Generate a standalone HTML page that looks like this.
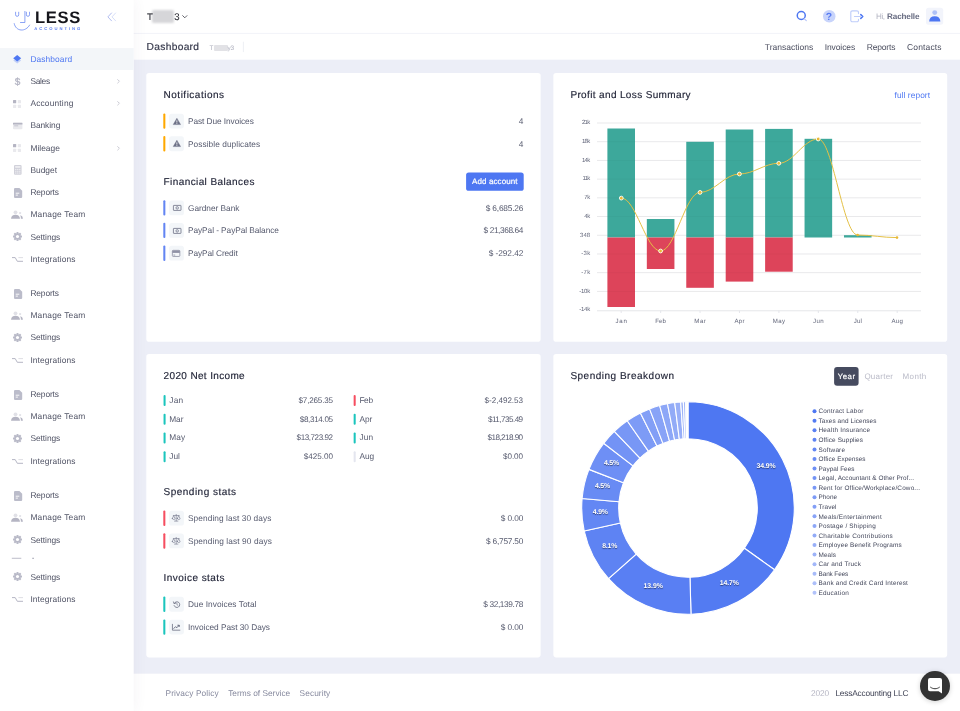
<!DOCTYPE html><html lang="en"><head><meta charset="utf-8"><title>Dashboard | LessAccounting</title><style>
*{box-sizing:border-box;margin:0;padding:0}
html,body{width:960px;height:711px;overflow:hidden}
body{position:relative;background:#eceef7;font-family:"Liberation Sans",sans-serif;color:#3f4254;text-rendering:geometricPrecision}
.t{position:absolute;white-space:nowrap;display:block}
.abs{position:absolute}
.side{position:absolute;left:0;top:0;width:133px;height:711px;background:#fff;box-shadow:0 0 14px rgba(82,63,105,.07);z-index:2}
.top{position:absolute;left:133.7px;top:0;right:0;height:33.8px;background:#fff;border-bottom:1px solid #f3f4f9}
.sub{position:absolute;left:133.7px;top:33.8px;right:0;height:25.9px;background:#fff}
.card{position:absolute;background:#fff;border-radius:3px}
.foot{position:absolute;left:133.7px;top:673.6px;right:0;bottom:0;background:#fff}
.act{position:absolute;left:0;top:48px;width:133.5px;height:22px;background:#f3f6f9}
.bar{position:absolute;width:2px;border-radius:1px}
.ib{position:absolute;width:14.8px;height:14.8px;border-radius:2.6px;background:#f3f6f9}
svg{position:absolute;overflow:visible}
.t,svg,.abs,.bar,.ib{z-index:3}
.tx{position:absolute;left:0;top:0;width:960px;height:711px;will-change:transform;z-index:4}

</style></head><body>
<svg style="left:0;top:0;z-index:1" width="960" height="711" viewBox="0 0 960 711"><rect x="133" y="0" width="827" height="59.700" fill="#fff"/><rect x="133" y="32.900" width="827" height=".9" fill="#f1f2f8"/><rect x="133" y="673.700" width="827" height="38" fill="#fff"/><rect x="146.300" y="73" width="394.350" height="268.750" rx="2.800" fill="#fff"/><rect x="553.350" y="73" width="393.850" height="268.750" rx="2.800" fill="#fff"/><rect x="146.300" y="354.100" width="394.350" height="303.300" rx="2.800" fill="#fff"/><rect x="553.350" y="354.100" width="393.850" height="303.300" rx="2.800" fill="#fff"/></svg>
<div class="side"></div><svg style="left:0;top:0;z-index:2" width="960" height="711" viewBox="0 0 960 711"><rect x="130" y="0" width="3.700" height="711" fill="#fff"/><rect x="0" y="48.100" width="133.700" height="21.900" fill="#f3f6f9"/></svg>
<svg style="left:0;top:0" width="134" height="40" viewBox="0 0 134 40" fill="none" stroke="#5a7df0" stroke-width="0.7" stroke-linecap="round" stroke-linejoin="round">
<path d="M15.6 12.2v2.6a1.55 1.55 0 0 0 3.1 0v-2.6"/><path d="M26.4 12.2v2.6a1.55 1.55 0 0 0 3.1 0v-2.6"/>
<path d="M24.9 11.4v11.1h-4.4"/><path d="M14.2 23.6c1.6 8.2 11.5 8.6 15.4 1.5"/>
<path d="M111.5 13l-3.6 3.9 3.6 3.9" stroke="#a9b6ee" stroke-width="0.9"/><path d="M115.6 13l-3.6 3.9 3.6 3.9" stroke="#d3daf7" stroke-width="0.9"/>
</svg>
<svg style="left:13.3px;top:55.0px" width="8.4" height="9" viewBox="0 0 8.4 9"><path d="M4.2 2.6L8.1 5.5 4.2 8.4 0.3 5.5z" fill="#4e77f2" opacity=".3"/><path d="M4.2 0L8.2 3.3 4.2 6.6 0.2 3.3z" fill="#4e77f2"/></svg>
<svg style="left:116.6px;top:79.0px" width="3" height="4.6" viewBox="0 0 3 4.6" fill="none" stroke="#b5b5c3" stroke-width=".7"><path d="M.4 .3l2 2-2 2"/></svg>
<svg style="left:13.1px;top:100.0px" width="8" height="8" viewBox="0 0 8 8" fill="#b5b5c3"><rect x="0" y="0" width="3.2" height="3.2" rx=".5"/><rect x="4.8" y="0" width="3.2" height="3.2" rx=".5" opacity=".3"/><rect x="0" y="4.8" width="3.2" height="3.2" rx=".5" opacity=".3"/><rect x="4.8" y="4.8" width="3.2" height="3.2" rx=".5" opacity=".3"/></svg>
<svg style="left:116.6px;top:101.2px" width="3" height="4.6" viewBox="0 0 3 4.6" fill="none" stroke="#b5b5c3" stroke-width=".7"><path d="M.4 .3l2 2-2 2"/></svg>
<svg style="left:12.7px;top:122.0px" width="9.4" height="7.2" viewBox="0 0 9.4 7.2" fill="#b5b5c3"><rect x="0" y="0" width="9.4" height="7.2" rx=".8" opacity=".3"/><rect x="0" y="1" width="9.4" height="1.5"/><rect x="1.2" y="3.4" width="4" height=".9" opacity=".8"/></svg>
<svg style="left:13.1px;top:144.4px" width="8" height="8" viewBox="0 0 8 8" fill="#b5b5c3"><rect x="0" y="0" width="3.2" height="3.2" rx=".5"/><rect x="4.8" y="0" width="3.2" height="3.2" rx=".5" opacity=".3"/><rect x="0" y="4.8" width="3.2" height="3.2" rx=".5" opacity=".3"/><rect x="4.8" y="4.8" width="3.2" height="3.2" rx=".5" opacity=".3"/></svg>
<svg style="left:116.6px;top:145.6px" width="3" height="4.6" viewBox="0 0 3 4.6" fill="none" stroke="#b5b5c3" stroke-width=".7"><path d="M.4 .3l2 2-2 2"/></svg>
<svg style="left:13.7px;top:165.2px" width="7.6" height="9.800" viewBox="0 0 7.6 9.800" fill="#b5b5c3"><rect x="0" y="0" width="7.6" height="9.800" rx="1.100" opacity=".62"/><rect x="1.200" y="1.200" width="5.200" height="1.500" fill="#fff" opacity=".75"/><g fill="#fff" opacity=".7"><rect x="1.200" y="3.900" width="1.200" height="1.100"/><rect x="3.200" y="3.900" width="1.200" height="1.100"/><rect x="5.200" y="3.900" width="1.200" height="1.100"/><rect x="1.200" y="5.700" width="1.200" height="1.100"/><rect x="3.200" y="5.700" width="1.200" height="1.100"/><rect x="5.200" y="5.700" width="1.200" height="1.100"/><rect x="1.200" y="7.500" width="1.200" height="1.100"/><rect x="3.200" y="7.500" width="1.200" height="1.100"/><rect x="5.200" y="7.500" width="1.200" height="1.100"/></g></svg>
<svg style="left:13.7px;top:187.8px" width="8.200" height="10" viewBox="0 0 8.200 10"><path d="M1.100 0h4.300L8.200 2.800v6.100a1.100 1.100 0 0 1-1.100 1.100H1.100a1.100 1.100 0 0 1-1.100-1.100V1.100a1.100 1.100 0 0 1 1.100-1.100z" fill="#bbbcca"/><rect x="1.700" y="4.700" width="3.600" height="1" fill="#fff" opacity=".9"/><rect x="1.700" y="6.600" width="2.200" height="1" fill="#fff" opacity=".9"/></svg>
<svg style="left:11.4px;top:209.9px" width="12" height="9" viewBox="0 0 12 9" fill="#b5b5c3"><circle cx="4.500" cy="2.300" r="1.900" opacity=".4"/><path d="M0 8.800c.2-2.700 1.800-4 4.500-4s4.300 1.300 4.500 4z"/><circle cx="9.100" cy="3.100" r="1.150" opacity=".4"/><path d="M9.900 8.800h2c-.1-2-.9-3.200-2.800-3.500 .6.900.8 2 .8 3.500z"/></svg>
<svg style="left:12.5px;top:232.2px" width="9" height="9" viewBox="-4.5 -4.5 9 9"><g fill="#b9bac8"><circle r="3.250"/><rect x="-1" y="-4.500" width="2" height="2.400" rx=".35" transform="rotate(0)"/><rect x="-1" y="-4.500" width="2" height="2.400" rx=".35" transform="rotate(45)"/><rect x="-1" y="-4.500" width="2" height="2.400" rx=".35" transform="rotate(90)"/><rect x="-1" y="-4.500" width="2" height="2.400" rx=".35" transform="rotate(135)"/><rect x="-1" y="-4.500" width="2" height="2.400" rx=".35" transform="rotate(180)"/><rect x="-1" y="-4.500" width="2" height="2.400" rx=".35" transform="rotate(225)"/><rect x="-1" y="-4.500" width="2" height="2.400" rx=".35" transform="rotate(270)"/><rect x="-1" y="-4.500" width="2" height="2.400" rx=".35" transform="rotate(315)"/></g><circle r="1.550" fill="#fff"/></svg>
<svg style="left:11.6px;top:256.7px" width="11" height="5" viewBox="0 0 11 5" fill="none" stroke="#adaebd" stroke-width=".9"><path d="M0 .6h3.200L5.300 4.300H11"/><path d="M6.400 .6H11" opacity=".45"/></svg>
<svg style="left:13.7px;top:288.6px" width="8.200" height="10" viewBox="0 0 8.200 10"><path d="M1.100 0h4.300L8.200 2.800v6.100a1.100 1.100 0 0 1-1.100 1.100H1.100a1.100 1.100 0 0 1-1.100-1.100V1.100a1.100 1.100 0 0 1 1.100-1.100z" fill="#bbbcca"/><rect x="1.700" y="4.700" width="3.600" height="1" fill="#fff" opacity=".9"/><rect x="1.700" y="6.600" width="2.200" height="1" fill="#fff" opacity=".9"/></svg>
<svg style="left:11.4px;top:310.7px" width="12" height="9" viewBox="0 0 12 9" fill="#b5b5c3"><circle cx="4.500" cy="2.300" r="1.900" opacity=".4"/><path d="M0 8.800c.2-2.700 1.800-4 4.500-4s4.300 1.300 4.500 4z"/><circle cx="9.100" cy="3.100" r="1.150" opacity=".4"/><path d="M9.900 8.800h2c-.1-2-.9-3.200-2.800-3.500 .6.900.8 2 .8 3.500z"/></svg>
<svg style="left:12.5px;top:333.0px" width="9" height="9" viewBox="-4.5 -4.5 9 9"><g fill="#b9bac8"><circle r="3.250"/><rect x="-1" y="-4.500" width="2" height="2.400" rx=".35" transform="rotate(0)"/><rect x="-1" y="-4.500" width="2" height="2.400" rx=".35" transform="rotate(45)"/><rect x="-1" y="-4.500" width="2" height="2.400" rx=".35" transform="rotate(90)"/><rect x="-1" y="-4.500" width="2" height="2.400" rx=".35" transform="rotate(135)"/><rect x="-1" y="-4.500" width="2" height="2.400" rx=".35" transform="rotate(180)"/><rect x="-1" y="-4.500" width="2" height="2.400" rx=".35" transform="rotate(225)"/><rect x="-1" y="-4.500" width="2" height="2.400" rx=".35" transform="rotate(270)"/><rect x="-1" y="-4.500" width="2" height="2.400" rx=".35" transform="rotate(315)"/></g><circle r="1.550" fill="#fff"/></svg>
<svg style="left:11.6px;top:357.5px" width="11" height="5" viewBox="0 0 11 5" fill="none" stroke="#adaebd" stroke-width=".9"><path d="M0 .6h3.200L5.300 4.300H11"/><path d="M6.400 .6H11" opacity=".45"/></svg>
<svg style="left:13.7px;top:389.6px" width="8.200" height="10" viewBox="0 0 8.200 10"><path d="M1.100 0h4.300L8.200 2.800v6.100a1.100 1.100 0 0 1-1.100 1.100H1.100a1.100 1.100 0 0 1-1.100-1.100V1.100a1.100 1.100 0 0 1 1.100-1.100z" fill="#bbbcca"/><rect x="1.700" y="4.700" width="3.600" height="1" fill="#fff" opacity=".9"/><rect x="1.700" y="6.600" width="2.200" height="1" fill="#fff" opacity=".9"/></svg>
<svg style="left:11.4px;top:411.7px" width="12" height="9" viewBox="0 0 12 9" fill="#b5b5c3"><circle cx="4.500" cy="2.300" r="1.900" opacity=".4"/><path d="M0 8.800c.2-2.700 1.800-4 4.500-4s4.300 1.300 4.500 4z"/><circle cx="9.100" cy="3.100" r="1.150" opacity=".4"/><path d="M9.900 8.800h2c-.1-2-.9-3.200-2.800-3.500 .6.900.8 2 .8 3.500z"/></svg>
<svg style="left:12.5px;top:434.0px" width="9" height="9" viewBox="-4.5 -4.5 9 9"><g fill="#b9bac8"><circle r="3.250"/><rect x="-1" y="-4.500" width="2" height="2.400" rx=".35" transform="rotate(0)"/><rect x="-1" y="-4.500" width="2" height="2.400" rx=".35" transform="rotate(45)"/><rect x="-1" y="-4.500" width="2" height="2.400" rx=".35" transform="rotate(90)"/><rect x="-1" y="-4.500" width="2" height="2.400" rx=".35" transform="rotate(135)"/><rect x="-1" y="-4.500" width="2" height="2.400" rx=".35" transform="rotate(180)"/><rect x="-1" y="-4.500" width="2" height="2.400" rx=".35" transform="rotate(225)"/><rect x="-1" y="-4.500" width="2" height="2.400" rx=".35" transform="rotate(270)"/><rect x="-1" y="-4.500" width="2" height="2.400" rx=".35" transform="rotate(315)"/></g><circle r="1.550" fill="#fff"/></svg>
<svg style="left:11.6px;top:458.5px" width="11" height="5" viewBox="0 0 11 5" fill="none" stroke="#adaebd" stroke-width=".9"><path d="M0 .6h3.200L5.300 4.300H11"/><path d="M6.400 .6H11" opacity=".45"/></svg>
<svg style="left:13.7px;top:490.7px" width="8.200" height="10" viewBox="0 0 8.200 10"><path d="M1.100 0h4.300L8.200 2.800v6.100a1.100 1.100 0 0 1-1.100 1.100H1.100a1.100 1.100 0 0 1-1.100-1.100V1.100a1.100 1.100 0 0 1 1.100-1.100z" fill="#bbbcca"/><rect x="1.700" y="4.700" width="3.600" height="1" fill="#fff" opacity=".9"/><rect x="1.700" y="6.600" width="2.200" height="1" fill="#fff" opacity=".9"/></svg>
<svg style="left:11.4px;top:512.8px" width="12" height="9" viewBox="0 0 12 9" fill="#b5b5c3"><circle cx="4.500" cy="2.300" r="1.900" opacity=".4"/><path d="M0 8.800c.2-2.700 1.800-4 4.500-4s4.300 1.300 4.500 4z"/><circle cx="9.100" cy="3.100" r="1.150" opacity=".4"/><path d="M9.900 8.800h2c-.1-2-.9-3.200-2.800-3.500 .6.900.8 2 .8 3.500z"/></svg>
<svg style="left:12.5px;top:535.1px" width="9" height="9" viewBox="-4.5 -4.5 9 9"><g fill="#b9bac8"><circle r="3.250"/><rect x="-1" y="-4.500" width="2" height="2.400" rx=".35" transform="rotate(0)"/><rect x="-1" y="-4.500" width="2" height="2.400" rx=".35" transform="rotate(45)"/><rect x="-1" y="-4.500" width="2" height="2.400" rx=".35" transform="rotate(90)"/><rect x="-1" y="-4.500" width="2" height="2.400" rx=".35" transform="rotate(135)"/><rect x="-1" y="-4.500" width="2" height="2.400" rx=".35" transform="rotate(180)"/><rect x="-1" y="-4.500" width="2" height="2.400" rx=".35" transform="rotate(225)"/><rect x="-1" y="-4.500" width="2" height="2.400" rx=".35" transform="rotate(270)"/><rect x="-1" y="-4.500" width="2" height="2.400" rx=".35" transform="rotate(315)"/></g><circle r="1.550" fill="#fff"/></svg>
<svg style="left:0;top:0" width="960" height="711" viewBox="0 0 960 711"><rect x="11.8" y="557.8" width="9.5" height="0.9" rx="0" fill="#b5b5c3"/></svg><svg style="left:0;top:0" width="960" height="711" viewBox="0 0 960 711"><rect x="32.2" y="557.8" width="1.8" height="0.9" rx="0" fill="#9a9cab"/></svg>
<svg style="left:12.5px;top:572.1px" width="9" height="9" viewBox="-4.5 -4.5 9 9"><g fill="#b9bac8"><circle r="3.250"/><rect x="-1" y="-4.500" width="2" height="2.400" rx=".35" transform="rotate(0)"/><rect x="-1" y="-4.500" width="2" height="2.400" rx=".35" transform="rotate(45)"/><rect x="-1" y="-4.500" width="2" height="2.400" rx=".35" transform="rotate(90)"/><rect x="-1" y="-4.500" width="2" height="2.400" rx=".35" transform="rotate(135)"/><rect x="-1" y="-4.500" width="2" height="2.400" rx=".35" transform="rotate(180)"/><rect x="-1" y="-4.500" width="2" height="2.400" rx=".35" transform="rotate(225)"/><rect x="-1" y="-4.500" width="2" height="2.400" rx=".35" transform="rotate(270)"/><rect x="-1" y="-4.500" width="2" height="2.400" rx=".35" transform="rotate(315)"/></g><circle r="1.550" fill="#fff"/></svg>
<svg style="left:11.6px;top:596.6px" width="11" height="5" viewBox="0 0 11 5" fill="none" stroke="#adaebd" stroke-width=".9"><path d="M0 .6h3.200L5.300 4.300H11"/><path d="M6.400 .6H11" opacity=".45"/></svg>
<div class="abs" style="left:152px;top:10.2px;width:22px;height:12.4px;background:#d6d6d9;border-radius:1.5px;filter:blur(.8px)"></div>
<svg style="left:182.4px;top:14.6px" width="5.6" height="3.4" viewBox="0 0 5.6 3.4" fill="none" stroke="#3a3b45" stroke-width=".8"><path d="M.4 .4l2.400 2.400 2.400-2.400"/></svg>
<svg style="left:795px;top:10px" width="13" height="13" viewBox="0 0 13 13" fill="none"><circle cx="6.250" cy="5.500" r="4" stroke="#4e77f2" stroke-width="1.500"/><path d="M9.300 8.700l2 1.900" stroke="#b9c7f9" stroke-width="1.200" stroke-linecap="round"/></svg>
<svg style="left:822.5px;top:9.65px" width="12.5" height="12.5" viewBox="0 0 12.5 12.5"><circle cx="6.250" cy="6.250" r="6.250" fill="#c8d4fb"/></svg>
<svg style="left:850px;top:9.6px" width="13.4" height="12.6" viewBox="0 0 13.4 12.6" fill="none" stroke-linecap="round" stroke-linejoin="round"><path d="M8.500 3.600V2.400A1.600 1.600 0 0 0 6.900 .8H2.400A1.600 1.600 0 0 0 .8 2.400v7.800a1.600 1.600 0 0 0 1.600 1.600h4.500a1.600 1.600 0 0 0 1.600-1.600V9.400" stroke="#bfcdfa" stroke-width="1.150"/><path d="M4.400 6.500h6" stroke="#bfcdfa" stroke-width="1.100"/><path d="M10.800 4.600l2 1.900-2 1.900" stroke="#4e77f2" stroke-width="1.500"/></svg>
<svg style="left:0;top:0" width="960" height="711" viewBox="0 0 960 711"><rect x="926" y="7.750" width="17.200" height="17.100" rx="2.500" fill="#f2f4fb"/></svg><svg style="left:928.6px;top:10.2px" width="11.8" height="11.6" viewBox="0 0 11.8 11.6" fill="#4e77f2"><circle cx="5.750" cy="2.600" r="2.450" opacity=".4"/><path d="M.15 11.500c.1-3.500 2.100-5.200 5.600-5.200s5.500 1.700 5.600 5.200z"/></svg>
<div class="abs" style="left:213.6px;top:44.6px;width:14.2px;height:6.6px;background:#e2e2e6;border-radius:1px;filter:blur(.5px)"></div>
<svg style="left:0;top:0" width="960" height="711" viewBox="0 0 960 711"><rect x="242.9" y="41.7" width="0.8" height="10.4" rx="0" fill="#e9ebf1"/></svg>
<div class="abs" style="left:919.7px;top:671px;width:30px;height:30px;border-radius:50%;background:#333;box-shadow:0 1px 5px rgba(0,0,0,.18);z-index:5"></div><svg style="left:927.8px;top:677.8px;z-index:6" width="14" height="16" viewBox="0 0 14 16"><path d="M2 0h10a2 2 0 0 1 2 2v13.600l-3.400-2.400H2a2 2 0 0 1-2-2V2a2 2 0 0 1 2-2z" fill="#fff"/><path d="M2.600 9.300c2.600 2 6.200 2 8.800 0" fill="none" stroke="#333" stroke-width="1" stroke-linecap="round"/></svg>
<svg style="left:0;top:0" width="960" height="711" viewBox="0 0 960 711"><rect x="163.300" y="113.40" width="2.050" height="15.400" rx="1" fill="#ffa800"/><rect x="169.100" y="113.65" width="14.800" height="14.800" rx="2.600" fill="#f3f6f9"/></svg>
<svg style="left:172.5px;top:117.7px" width="7.800" height="6.800" viewBox="0 0 7.800 6.800"><path d="M3.900 .2L7.600 6.600H.2z" fill="#6c7086" stroke="#6c7086" stroke-width=".4" stroke-linejoin="round"/><rect x="3.500" y="2.300" width=".8" height="2.300" fill="#fff"/><rect x="3.500" y="5.050" width=".8" height=".8" fill="#fff"/></svg>
<svg style="left:0;top:0" width="960" height="711" viewBox="0 0 960 711"><rect x="163.300" y="136.10" width="2.050" height="15.400" rx="1" fill="#ffa800"/><rect x="169.100" y="136.35" width="14.800" height="14.800" rx="2.600" fill="#f3f6f9"/></svg>
<svg style="left:172.5px;top:140.4px" width="7.800" height="6.800" viewBox="0 0 7.800 6.800"><path d="M3.900 .2L7.600 6.600H.2z" fill="#6c7086" stroke="#6c7086" stroke-width=".4" stroke-linejoin="round"/><rect x="3.500" y="2.300" width=".8" height="2.300" fill="#fff"/><rect x="3.500" y="5.050" width=".8" height=".8" fill="#fff"/></svg>
<svg style="left:0;top:0" width="960" height="711" viewBox="0 0 960 711"><rect x="163.300" y="200.20" width="2.050" height="15.400" rx="1" fill="#6385f3"/><rect x="169.100" y="200.45" width="14.800" height="14.800" rx="2.600" fill="#f3f6f9"/></svg>
<svg style="left:172.6px;top:205.0px" width="8.400" height="5.800" viewBox="0 0 8.400 5.800" fill="none" stroke="#62667c" stroke-width=".75"><rect x=".4" y=".4" width="7.600" height="5" rx=".4"/><circle cx="4.200" cy="2.900" r="1.250" stroke-width=".7"/></svg>
<svg style="left:0;top:0" width="960" height="711" viewBox="0 0 960 711"><rect x="163.300" y="222.70" width="2.050" height="15.400" rx="1" fill="#6385f3"/><rect x="169.100" y="222.95" width="14.800" height="14.800" rx="2.600" fill="#f3f6f9"/></svg>
<svg style="left:172.6px;top:227.5px" width="8.400" height="5.800" viewBox="0 0 8.400 5.800" fill="none" stroke="#62667c" stroke-width=".75"><rect x=".4" y=".4" width="7.600" height="5" rx=".4"/><circle cx="4.200" cy="2.900" r="1.250" stroke-width=".7"/></svg>
<svg style="left:0;top:0" width="960" height="711" viewBox="0 0 960 711"><rect x="163.300" y="245.50" width="2.050" height="15.400" rx="1" fill="#6385f3"/><rect x="169.100" y="245.75" width="14.800" height="14.800" rx="2.600" fill="#f3f6f9"/></svg>
<svg style="left:172.3px;top:249.9px" width="8.200" height="6.800" viewBox="0 0 8.200 6.800"><rect x=".35" y=".35" width="7.500" height="6.100" rx=".8" fill="none" stroke="#7d8096" stroke-width=".7"/><rect x=".35" y=".6" width="7.500" height="2.300" fill="#8f92a6"/><rect x="1.300" y="4.700" width="1.900" height=".7" fill="#7d8096"/></svg>
<svg style="left:0;top:0" width="960" height="711" viewBox="0 0 960 711"><rect x="466.1" y="172.4" width="57.6" height="18.4" rx="2.6" fill="#4e77f2"/></svg>
<svg style="left:0;top:0" width="960" height="711" viewBox="0 0 960 711"><rect x="163.55" y="395.05" width="2.050" height="10.900" rx="1" fill="#1bc5bd"/></svg>
<svg style="left:0;top:0" width="960" height="711" viewBox="0 0 960 711"><rect x="353.65" y="395.05" width="2.050" height="10.900" rx="1" fill="#f64e60"/></svg>
<svg style="left:0;top:0" width="960" height="711" viewBox="0 0 960 711"><rect x="163.55" y="413.82" width="2.050" height="10.900" rx="1" fill="#1bc5bd"/></svg>
<svg style="left:0;top:0" width="960" height="711" viewBox="0 0 960 711"><rect x="353.65" y="413.82" width="2.050" height="10.900" rx="1" fill="#1bc5bd"/></svg>
<svg style="left:0;top:0" width="960" height="711" viewBox="0 0 960 711"><rect x="163.55" y="432.59" width="2.050" height="10.900" rx="1" fill="#1bc5bd"/></svg>
<svg style="left:0;top:0" width="960" height="711" viewBox="0 0 960 711"><rect x="353.65" y="432.59" width="2.050" height="10.900" rx="1" fill="#1bc5bd"/></svg>
<svg style="left:0;top:0" width="960" height="711" viewBox="0 0 960 711"><rect x="163.55" y="451.36" width="2.050" height="10.900" rx="1" fill="#1bc5bd"/></svg>
<svg style="left:0;top:0" width="960" height="711" viewBox="0 0 960 711"><rect x="353.65" y="451.36" width="2.050" height="10.900" rx="1" fill="#e4e6ef"/></svg>
<svg style="left:0;top:0" width="960" height="711" viewBox="0 0 960 711"><rect x="163.300" y="510.50" width="2.050" height="15.400" rx="1" fill="#f64e60"/><rect x="169.100" y="510.75" width="14.800" height="14.800" rx="2.600" fill="#f3f6f9"/></svg>
<svg style="left:172.2px;top:514.3px" width="8.400" height="7.600" viewBox="0 0 8.400 7.600" fill="none" stroke="#6d7187" stroke-width=".6" stroke-linecap="round" stroke-linejoin="round"><path d="M4.200 .4v6.400M2.500 7.100h3.400M1.300 1.500h5.800"/><path d="M.35 4.400L1.700 1.700l1.350 2.700a1.350 1.150 0 0 1-2.700 0zM5.350 4.400L6.700 1.700l1.350 2.700a1.350 1.150 0 0 1-2.700 0z"/></svg>
<svg style="left:0;top:0" width="960" height="711" viewBox="0 0 960 711"><rect x="163.300" y="533.30" width="2.050" height="15.400" rx="1" fill="#f64e60"/><rect x="169.100" y="533.55" width="14.800" height="14.800" rx="2.600" fill="#f3f6f9"/></svg>
<svg style="left:172.2px;top:537.1px" width="8.400" height="7.600" viewBox="0 0 8.400 7.600" fill="none" stroke="#6d7187" stroke-width=".6" stroke-linecap="round" stroke-linejoin="round"><path d="M4.200 .4v6.400M2.500 7.100h3.400M1.300 1.500h5.800"/><path d="M.35 4.400L1.700 1.700l1.350 2.700a1.350 1.150 0 0 1-2.700 0zM5.350 4.400L6.700 1.700l1.350 2.700a1.350 1.150 0 0 1-2.700 0z"/></svg>
<svg style="left:0;top:0" width="960" height="711" viewBox="0 0 960 711"><rect x="163.300" y="596.60" width="2.050" height="15.400" rx="1" fill="#1bc5bd"/><rect x="169.100" y="596.85" width="14.800" height="14.800" rx="2.600" fill="#f3f6f9"/></svg>
<svg style="left:172.8px;top:600.9px" width="7.200" height="6.800" viewBox="0 0 7.200 6.800" fill="none" stroke="#5f6378" stroke-width=".75" stroke-linecap="round" stroke-linejoin="round"><path d="M1.300 2.200A2.900 2.900 0 1 1 1.100 4.600"/><path d="M.5 .9l.6 1.700 1.700-.5" /><path d="M3.900 2.100v1.500l1 .7" stroke-width=".6"/></svg>
<svg style="left:0;top:0" width="960" height="711" viewBox="0 0 960 711"><rect x="163.300" y="619.40" width="2.050" height="15.400" rx="1" fill="#1bc5bd"/><rect x="169.100" y="619.65" width="14.800" height="14.800" rx="2.600" fill="#f3f6f9"/></svg>
<svg style="left:172.3px;top:623.8px" width="8.200" height="6.600" viewBox="0 0 7.600 6.400" preserveAspectRatio="none" fill="none" stroke="#5f6378" stroke-width=".7" stroke-linecap="round" stroke-linejoin="round"><path d="M.4 .3v5.700h6.900"/><path d="M1.700 4.300l1.600-1.700 1.200 1 2.100-2.300M5.400 1.200h1.300v1.300" stroke-width=".85"/></svg>
<svg style="left:0;top:0" width="960" height="711" viewBox="0 0 960 711"><path d="M597 123.00H921" stroke="#efeff1" stroke-width="1"/><path d="M597 141.71H921" stroke="#efeff1" stroke-width="1"/><path d="M597 160.42H921" stroke="#efeff1" stroke-width="1"/><path d="M597 179.13H921" stroke="#efeff1" stroke-width="1"/><path d="M597 197.84H921" stroke="#efeff1" stroke-width="1"/><path d="M597 216.55H921" stroke="#efeff1" stroke-width="1"/><path d="M597 235.26H921" stroke="#efeff1" stroke-width="1"/><path d="M597 253.97H921" stroke="#efeff1" stroke-width="1"/><path d="M597 272.68H921" stroke="#efeff1" stroke-width="1"/><path d="M597 291.39H921" stroke="#efeff1" stroke-width="1"/><path d="M597 310.80H921" stroke="#e2e3e6" stroke-width="0.9"/><path d="M621.20 310.80v2.200" stroke="#dfe1e7" stroke-width=".8"/><rect x="607.40" y="128.5" width="27.6" height="109.00" fill="#3da89b"/><rect x="607.40" y="237.5" width="27.6" height="69.50" fill="#dd445a"/><path d="M660.63 310.80v2.200" stroke="#dfe1e7" stroke-width=".8"/><rect x="646.83" y="219.0" width="27.6" height="18.50" fill="#3da89b"/><rect x="646.83" y="237.5" width="27.6" height="31.50" fill="#dd445a"/><path d="M700.06 310.80v2.200" stroke="#dfe1e7" stroke-width=".8"/><rect x="686.26" y="141.8" width="27.6" height="95.70" fill="#3da89b"/><rect x="686.26" y="237.5" width="27.6" height="50.30" fill="#dd445a"/><path d="M739.49 310.80v2.200" stroke="#dfe1e7" stroke-width=".8"/><rect x="725.69" y="129.5" width="27.6" height="108.00" fill="#3da89b"/><rect x="725.69" y="237.5" width="27.6" height="44.10" fill="#dd445a"/><path d="M778.92 310.80v2.200" stroke="#dfe1e7" stroke-width=".8"/><rect x="765.12" y="128.9" width="27.6" height="108.60" fill="#3da89b"/><rect x="765.12" y="237.5" width="27.6" height="34.20" fill="#dd445a"/><path d="M818.35 310.80v2.200" stroke="#dfe1e7" stroke-width=".8"/><rect x="804.55" y="138.8" width="27.6" height="98.70" fill="#3da89b"/><path d="M857.78 310.80v2.200" stroke="#dfe1e7" stroke-width=".8"/><rect x="843.98" y="235.2" width="27.6" height="2.30" fill="#3da89b"/><path d="M897.21 310.80v2.200" stroke="#dfe1e7" stroke-width=".8"/><path d="M597 123.00H921" stroke="#000" stroke-opacity=".028" stroke-width="1"/><path d="M597 141.71H921" stroke="#000" stroke-opacity=".028" stroke-width="1"/><path d="M597 160.42H921" stroke="#000" stroke-opacity=".028" stroke-width="1"/><path d="M597 179.13H921" stroke="#000" stroke-opacity=".028" stroke-width="1"/><path d="M597 197.84H921" stroke="#000" stroke-opacity=".028" stroke-width="1"/><path d="M597 216.55H921" stroke="#000" stroke-opacity=".028" stroke-width="1"/><path d="M597 235.26H921" stroke="#000" stroke-opacity=".028" stroke-width="1"/><path d="M597 253.97H921" stroke="#000" stroke-opacity=".028" stroke-width="1"/><path d="M597 272.68H921" stroke="#000" stroke-opacity=".028" stroke-width="1"/><path d="M597 291.39H921" stroke="#000" stroke-opacity=".028" stroke-width="1"/><path d="M621.3 198.1C635.9 198.1 646.0 251.0 660.6 251.0C675.2 251.0 685.4 192.4 700.0 192.4C714.6 192.4 724.8 174.0 739.4 174.0C754.0 174.0 764.2 163.3 778.8 163.3C793.4 163.3 803.6 139.0 818.2 139.0C832.8 139.0 843.0 235.0 857.6 235.0C872.2 235.0 882.4 237.6 897.0 237.6" fill="none" stroke="#e4c045" stroke-width="1"/><circle cx="621.3" cy="198.1" r="1.900" fill="#e9b936" stroke="#fff" stroke-width=".9"/><circle cx="660.6" cy="251.0" r="1.900" fill="#e9b936" stroke="#fff" stroke-width=".9"/><circle cx="700.0" cy="192.4" r="1.900" fill="#e9b936" stroke="#fff" stroke-width=".9"/><circle cx="739.4" cy="174.0" r="1.900" fill="#e9b936" stroke="#fff" stroke-width=".9"/><circle cx="778.8" cy="163.3" r="1.900" fill="#e9b936" stroke="#fff" stroke-width=".9"/><circle cx="818.2" cy="139.0" r="1.900" fill="#e9b936" stroke="#fff" stroke-width=".9"/><circle cx="857.6" cy="235.0" r="1.300" fill="#e9b936"/><circle cx="897.0" cy="237.6" r="1.300" fill="#e9b936"/></svg>
<svg style="left:0;top:0" width="960" height="711" viewBox="0 0 960 711"><rect x="834.1" y="367.1" width="24.5" height="18.6" rx="3" fill="#464b5f"/></svg>
<svg style="left:0;top:0" width="960" height="711" viewBox="0 0 960 711"><path d="M688.00 401.70A106.3 106.3 0 0 1 774.52 569.75L744.41 548.26A69.3 69.3 0 0 0 688.00 438.70Z" fill="#4e77f2" stroke="#fff" stroke-width="1.100" stroke-linejoin="round"/><path d="M774.52 569.75A106.3 106.3 0 0 1 691.00 614.26L689.96 577.27A69.3 69.3 0 0 0 744.41 548.26Z" fill="#537bf2" stroke="#fff" stroke-width="1.100" stroke-linejoin="round"/><path d="M691.00 614.26A106.3 106.3 0 0 1 608.54 578.61L636.20 554.04A69.3 69.3 0 0 0 689.96 577.27Z" fill="#597ff3" stroke="#fff" stroke-width="1.100" stroke-linejoin="round"/><path d="M608.54 578.61A106.3 106.3 0 0 1 584.22 531.00L620.34 523.00A69.3 69.3 0 0 0 636.20 554.04Z" fill="#5e83f3" stroke="#fff" stroke-width="1.100" stroke-linejoin="round"/><path d="M584.22 531.00A106.3 106.3 0 0 1 582.12 498.50L618.98 501.81A69.3 69.3 0 0 0 620.34 523.00Z" fill="#6387f4" stroke="#fff" stroke-width="1.100" stroke-linejoin="round"/><path d="M582.12 498.50A106.3 106.3 0 0 1 588.97 469.37L623.44 482.82A69.3 69.3 0 0 0 618.98 501.81Z" fill="#688bf4" stroke="#fff" stroke-width="1.100" stroke-linejoin="round"/><path d="M588.97 469.37A106.3 106.3 0 0 1 603.66 443.30L633.02 465.82A69.3 69.3 0 0 0 623.44 482.82Z" fill="#6e8ff5" stroke="#fff" stroke-width="1.100" stroke-linejoin="round"/><path d="M603.66 443.30A106.3 106.3 0 0 1 614.32 431.37L639.97 458.05A69.3 69.3 0 0 0 633.02 465.82Z" fill="#7393f5" stroke="#fff" stroke-width="1.100" stroke-linejoin="round"/><path d="M614.32 431.37A106.3 106.3 0 0 1 627.20 420.80L648.37 451.15A69.3 69.3 0 0 0 639.97 458.05Z" fill="#7897f5" stroke="#fff" stroke-width="1.100" stroke-linejoin="round"/><path d="M627.20 420.80A106.3 106.3 0 0 1 640.38 412.96L656.96 446.04A69.3 69.3 0 0 0 648.37 451.15Z" fill="#7d9bf6" stroke="#fff" stroke-width="1.100" stroke-linejoin="round"/><path d="M640.38 412.96A106.3 106.3 0 0 1 649.53 408.91L662.92 443.40A69.3 69.3 0 0 0 656.96 446.04Z" fill="#839ff6" stroke="#fff" stroke-width="1.100" stroke-linejoin="round"/><path d="M649.53 408.91A106.3 106.3 0 0 1 659.66 405.55L669.52 441.21A69.3 69.3 0 0 0 662.92 443.40Z" fill="#88a3f7" stroke="#fff" stroke-width="1.100" stroke-linejoin="round"/><path d="M659.66 405.55A106.3 106.3 0 0 1 667.45 403.71L674.60 440.01A69.3 69.3 0 0 0 669.52 441.21Z" fill="#8da7f7" stroke="#fff" stroke-width="1.100" stroke-linejoin="round"/><path d="M667.45 403.71A106.3 106.3 0 0 1 674.69 402.54L679.32 439.25A69.3 69.3 0 0 0 674.60 440.01Z" fill="#92abf7" stroke="#fff" stroke-width="1.100" stroke-linejoin="round"/><path d="M674.69 402.54A106.3 106.3 0 0 1 680.67 401.95L683.22 438.87A69.3 69.3 0 0 0 679.32 439.25Z" fill="#98aff8" stroke="#fff" stroke-width="1.100" stroke-linejoin="round"/><path d="M680.67 401.95A106.3 106.3 0 0 1 683.33 401.80L684.96 438.77A69.3 69.3 0 0 0 683.22 438.87Z" fill="#9db3f8" stroke="#fff" stroke-width="1.100" stroke-linejoin="round"/><path d="M683.33 401.80A106.3 106.3 0 0 1 685.66 401.73L686.48 438.72A69.3 69.3 0 0 0 684.96 438.77Z" fill="#a2b7f9" stroke="#fff" stroke-width="1.100" stroke-linejoin="round"/><path d="M685.66 401.73A106.3 106.3 0 0 1 686.67 401.71L687.13 438.71A69.3 69.3 0 0 0 686.48 438.72Z" fill="#a7bbf9" stroke="#fff" stroke-width="1.100" stroke-linejoin="round"/><path d="M686.67 401.71A106.3 106.3 0 0 1 687.33 401.70L687.57 438.70A69.3 69.3 0 0 0 687.13 438.71Z" fill="#adbffa" stroke="#fff" stroke-width="1.100" stroke-linejoin="round"/><path d="M687.33 401.70A106.3 106.3 0 0 1 688.00 401.70L688.00 438.70A69.3 69.3 0 0 0 687.57 438.70Z" fill="#b2c3fa" stroke="#fff" stroke-width="1.100" stroke-linejoin="round"/></svg>
<svg style="left:0;top:0" width="960" height="711" viewBox="0 0 960 711"><circle cx="814.5" cy="411.15" r="2" fill="#4e77f2"/><circle cx="814.5" cy="420.71" r="2" fill="#537bf2"/><circle cx="814.5" cy="430.28" r="2" fill="#597ff3"/><circle cx="814.5" cy="439.84" r="2" fill="#5e83f3"/><circle cx="814.5" cy="449.40" r="2" fill="#6387f4"/><circle cx="814.5" cy="458.96" r="2" fill="#688bf4"/><circle cx="814.5" cy="468.53" r="2" fill="#6e8ff5"/><circle cx="814.5" cy="478.09" r="2" fill="#7393f5"/><circle cx="814.5" cy="487.65" r="2" fill="#7897f5"/><circle cx="814.5" cy="497.22" r="2" fill="#7d9bf6"/><circle cx="814.5" cy="506.78" r="2" fill="#839ff6"/><circle cx="814.5" cy="516.34" r="2" fill="#88a3f7"/><circle cx="814.5" cy="525.91" r="2" fill="#8da7f7"/><circle cx="814.5" cy="535.47" r="2" fill="#92abf7"/><circle cx="814.5" cy="545.03" r="2" fill="#98aff8"/><circle cx="814.5" cy="554.60" r="2" fill="#9db3f8"/><circle cx="814.5" cy="564.16" r="2" fill="#a2b7f9"/><circle cx="814.5" cy="573.72" r="2" fill="#a7bbf9"/><circle cx="814.5" cy="583.28" r="2" fill="#adbffa"/><circle cx="814.5" cy="592.85" r="2" fill="#b2c3fa"/></svg>
<div class="tx">
<span class="t" style="font-size:16.6px;line-height:21px;top:7px;color:#15151b;font-weight:700;letter-spacing:0.685px;left:34.90px;">LESS</span>
<span class="t" style="font-size:4.2px;line-height:6px;top:26px;color:#5a7df0;font-weight:700;letter-spacing:1.957px;left:34.30px;">ACCOUNTING</span>
<span class="t" style="font-size:8.4px;line-height:11px;top:54px;color:#4e77f2;letter-spacing:0.102px;left:30.40px;">Dashboard</span>
<span class="t" style="font-size:10px;line-height:13px;top:76px;color:#b3b4c3;-webkit-text-stroke:0.3px #b3b4c3;left:17.60px;transform:translateX(-50%);">$</span>
<span class="t" style="font-size:8.4px;line-height:11px;top:76px;color:#505365;letter-spacing:-0.313px;left:30.40px;">Sales</span>
<span class="t" style="font-size:8.4px;line-height:11px;top:98px;color:#505365;letter-spacing:0.174px;left:30.40px;">Accounting</span>
<span class="t" style="font-size:8.4px;line-height:11px;top:120px;color:#505365;letter-spacing:-0.061px;left:30.40px;">Banking</span>
<span class="t" style="font-size:8.4px;line-height:11px;top:143px;color:#505365;letter-spacing:0.026px;left:30.40px;">Mileage</span>
<span class="t" style="font-size:8.4px;line-height:11px;top:165px;color:#505365;letter-spacing:0.011px;left:30.40px;">Budget</span>
<span class="t" style="font-size:8.4px;line-height:11px;top:187px;color:#505365;letter-spacing:-0.121px;left:30.40px;">Reports</span>
<span class="t" style="font-size:8.4px;line-height:11px;top:209px;color:#505365;letter-spacing:0.198px;left:30.40px;">Manage Team</span>
<span class="t" style="font-size:8.4px;line-height:11px;top:232px;color:#505365;letter-spacing:-0.052px;left:30.40px;">Settings</span>
<span class="t" style="font-size:8.4px;line-height:11px;top:254px;color:#505365;letter-spacing:0.112px;left:30.40px;">Integrations</span>
<span class="t" style="font-size:8.4px;line-height:11px;top:288px;color:#505365;letter-spacing:-0.121px;left:30.40px;">Reports</span>
<span class="t" style="font-size:8.4px;line-height:11px;top:310px;color:#505365;letter-spacing:0.198px;left:30.40px;">Manage Team</span>
<span class="t" style="font-size:8.4px;line-height:11px;top:332px;color:#505365;letter-spacing:-0.052px;left:30.40px;">Settings</span>
<span class="t" style="font-size:8.4px;line-height:11px;top:355px;color:#505365;letter-spacing:0.112px;left:30.40px;">Integrations</span>
<span class="t" style="font-size:8.4px;line-height:11px;top:389px;color:#505365;letter-spacing:-0.121px;left:30.40px;">Reports</span>
<span class="t" style="font-size:8.4px;line-height:11px;top:411px;color:#505365;letter-spacing:0.198px;left:30.40px;">Manage Team</span>
<span class="t" style="font-size:8.4px;line-height:11px;top:433px;color:#505365;letter-spacing:-0.052px;left:30.40px;">Settings</span>
<span class="t" style="font-size:8.4px;line-height:11px;top:456px;color:#505365;letter-spacing:0.112px;left:30.40px;">Integrations</span>
<span class="t" style="font-size:8.4px;line-height:11px;top:490px;color:#505365;letter-spacing:-0.121px;left:30.40px;">Reports</span>
<span class="t" style="font-size:8.4px;line-height:11px;top:512px;color:#505365;letter-spacing:0.198px;left:30.40px;">Manage Team</span>
<span class="t" style="font-size:8.4px;line-height:11px;top:535px;color:#505365;letter-spacing:-0.052px;left:30.40px;">Settings</span>
<span class="t" style="font-size:8.4px;line-height:11px;top:572px;color:#505365;letter-spacing:-0.052px;left:30.40px;">Settings</span>
<span class="t" style="font-size:8.4px;line-height:11px;top:594px;color:#505365;letter-spacing:0.112px;left:30.40px;">Integrations</span>
<span class="t" style="font-size:9.6px;line-height:12px;top:12px;color:#2a2b33;-webkit-text-stroke:0.1px #2a2b33;left:147.00px;">T</span>
<span class="t" style="font-size:9.6px;line-height:12px;top:12px;color:#2a2b33;-webkit-text-stroke:0.1px #2a2b33;left:174.30px;">3</span>
<span class="t" style="font-size:10.4px;line-height:13px;top:11px;color:#587cf3;font-weight:700;left:828.90px;transform:translateX(-50%);">?</span>
<span class="t" style="font-size:8.1px;line-height:11px;top:11px;color:#b3b4c2;letter-spacing:-0.503px;left:876.10px;">Hi,</span>
<span class="t" style="font-size:8.1px;line-height:11px;top:11px;color:#676b81;font-weight:700;letter-spacing:-0.128px;left:887.10px;">Rachelle</span>
<span class="t" style="font-size:10.2px;line-height:13px;top:41px;color:#34374a;-webkit-text-stroke:0.18px #34374a;letter-spacing:0.320px;left:146.60px;">Dashboard</span>
<span class="t" style="font-size:6.4px;line-height:8px;top:45px;color:#aeb0be;left:209.40px;">T</span>
<span class="t" style="font-size:6.4px;line-height:8px;top:45px;color:#aeb0be;left:227.40px;">y3</span>
<span class="t" style="font-size:8.5px;line-height:11px;top:42px;color:#4a4d5e;letter-spacing:0.005px;left:764.80px;">Transactions</span>
<span class="t" style="font-size:8.5px;line-height:11px;top:42px;color:#4a4d5e;letter-spacing:-0.098px;left:824.70px;">Invoices</span>
<span class="t" style="font-size:8.5px;line-height:11px;top:42px;color:#4a4d5e;letter-spacing:-0.161px;left:866.70px;">Reports</span>
<span class="t" style="font-size:8.5px;line-height:11px;top:42px;color:#4a4d5e;letter-spacing:0.150px;left:907.00px;">Contacts</span>
<span class="t" style="font-size:8.3px;line-height:11px;top:688px;color:#85889d;letter-spacing:0.105px;left:165.60px;">Privacy Policy</span>
<span class="t" style="font-size:8.3px;line-height:11px;top:688px;color:#85889d;letter-spacing:0.015px;left:228.20px;">Terms of Service</span>
<span class="t" style="font-size:8.3px;line-height:11px;top:688px;color:#85889d;letter-spacing:0.088px;left:299.60px;">Security</span>
<span class="t" style="font-size:8.3px;line-height:11px;top:688px;color:#b5b5c3;letter-spacing:-0.156px;left:811.00px;">2020</span>
<span class="t" style="font-size:8.3px;line-height:11px;top:688px;color:#3f4254;letter-spacing:-0.183px;left:835.40px;">LessAccounting LLC</span>
<span class="t" style="font-size:10px;line-height:13px;top:89px;color:#212437;-webkit-text-stroke:0.15px #212437;letter-spacing:0.494px;left:163.60px;">Notifications</span>
<span class="t" style="font-size:10px;line-height:13px;top:176px;color:#212437;-webkit-text-stroke:0.15px #212437;letter-spacing:0.404px;left:163.60px;">Financial Balances</span>
<span class="t" style="font-size:8.3px;line-height:11px;top:116px;color:#565a6e;letter-spacing:-0.067px;left:188.00px;">Past Due Invoices</span>
<span class="t" style="font-size:8.3px;line-height:11px;top:116px;color:#565a6e;right:436.70px;">4</span>
<span class="t" style="font-size:8.3px;line-height:11px;top:139px;color:#565a6e;letter-spacing:0.065px;left:188.00px;">Possible duplicates</span>
<span class="t" style="font-size:8.3px;line-height:11px;top:139px;color:#565a6e;right:436.70px;">4</span>
<span class="t" style="font-size:8.3px;line-height:11px;top:203px;color:#565a6e;letter-spacing:-0.023px;left:188.00px;">Gardner Bank</span>
<span class="t" style="font-size:8.3px;line-height:11px;top:203px;color:#565a6e;letter-spacing:-0.191px;right:436.89px;">$ 6,685.26</span>
<span class="t" style="font-size:8.3px;line-height:11px;top:225px;color:#565a6e;letter-spacing:-0.061px;left:188.00px;">PayPal - PayPal Balance</span>
<span class="t" style="font-size:8.3px;line-height:11px;top:225px;color:#565a6e;letter-spacing:-0.414px;right:437.11px;">$ 21,368.64</span>
<span class="t" style="font-size:8.3px;line-height:11px;top:248px;color:#565a6e;letter-spacing:-0.086px;left:188.00px;">PayPal Credit</span>
<span class="t" style="font-size:8.3px;line-height:11px;top:248px;color:#565a6e;letter-spacing:-0.058px;right:436.76px;">$ -292.42</span>
<span class="t" style="font-size:8px;line-height:10px;top:177px;color:#fff;-webkit-text-stroke:0.2px #fff;letter-spacing:0.092px;left:472.10px;z-index:4;">Add account</span>
<span class="t" style="font-size:10px;line-height:13px;top:370px;color:#212437;-webkit-text-stroke:0.15px #212437;letter-spacing:0.352px;left:163.60px;">2020 Net Income</span>
<span class="t" style="font-size:10px;line-height:13px;top:486px;color:#212437;-webkit-text-stroke:0.15px #212437;letter-spacing:0.479px;left:163.60px;">Spending stats</span>
<span class="t" style="font-size:10px;line-height:13px;top:572px;color:#212437;-webkit-text-stroke:0.15px #212437;letter-spacing:0.451px;left:163.60px;">Invoice stats</span>
<span class="t" style="font-size:8.3px;line-height:11px;top:395px;color:#565a6e;letter-spacing:0.255px;left:169.30px;">Jan</span>
<span class="t" style="font-size:8.1px;line-height:11px;top:395px;color:#565a6e;letter-spacing:-0.177px;right:627.08px;">$7,265.35</span>
<span class="t" style="font-size:8.3px;line-height:11px;top:395px;color:#565a6e;letter-spacing:-0.348px;left:359.40px;">Feb</span>
<span class="t" style="font-size:8.1px;line-height:11px;top:395px;color:#565a6e;letter-spacing:-0.011px;right:436.91px;">$-2,492.53</span>
<span class="t" style="font-size:8.3px;line-height:11px;top:414px;color:#565a6e;letter-spacing:-0.098px;left:169.30px;">Mar</span>
<span class="t" style="font-size:8.1px;line-height:11px;top:414px;color:#565a6e;letter-spacing:-0.339px;right:627.24px;">$8,314.05</span>
<span class="t" style="font-size:8.3px;line-height:11px;top:414px;color:#565a6e;letter-spacing:-0.011px;left:359.40px;">Apr</span>
<span class="t" style="font-size:8.1px;line-height:11px;top:414px;color:#565a6e;letter-spacing:-0.525px;right:437.42px;">$11,735.49</span>
<span class="t" style="font-size:8.3px;line-height:11px;top:432px;color:#565a6e;letter-spacing:0.056px;left:169.30px;">May</span>
<span class="t" style="font-size:8.1px;line-height:11px;top:432px;color:#565a6e;letter-spacing:-0.446px;right:627.35px;">$13,723.92</span>
<span class="t" style="font-size:8.3px;line-height:11px;top:432px;color:#565a6e;letter-spacing:0.155px;left:359.40px;">Jun</span>
<span class="t" style="font-size:8.1px;line-height:11px;top:432px;color:#565a6e;letter-spacing:-0.546px;right:437.45px;">$18,218.90</span>
<span class="t" style="font-size:8.3px;line-height:11px;top:451px;color:#565a6e;letter-spacing:-0.005px;left:169.30px;">Jul</span>
<span class="t" style="font-size:8.1px;line-height:11px;top:451px;color:#565a6e;letter-spacing:0.006px;right:626.89px;">$425.00</span>
<span class="t" style="font-size:8.3px;line-height:11px;top:451px;color:#565a6e;letter-spacing:0.017px;left:359.40px;">Aug</span>
<span class="t" style="font-size:8.1px;line-height:11px;top:451px;color:#565a6e;letter-spacing:-0.016px;right:436.92px;">$0.00</span>
<span class="t" style="font-size:8.3px;line-height:11px;top:513px;color:#565a6e;letter-spacing:0.082px;left:188.00px;">Spending last 30 days</span>
<span class="t" style="font-size:8.3px;line-height:11px;top:513px;color:#565a6e;letter-spacing:-0.116px;right:436.82px;">$ 0.00</span>
<span class="t" style="font-size:8.3px;line-height:11px;top:536px;color:#565a6e;letter-spacing:0.107px;left:188.00px;">Spending last 90 days</span>
<span class="t" style="font-size:8.3px;line-height:11px;top:536px;color:#565a6e;letter-spacing:-0.224px;right:436.92px;">$ 6,757.50</span>
<span class="t" style="font-size:8.3px;line-height:11px;top:599px;color:#565a6e;letter-spacing:0.044px;left:188.00px;">Due Invoices Total</span>
<span class="t" style="font-size:8.3px;line-height:11px;top:599px;color:#565a6e;letter-spacing:-0.384px;right:437.08px;">$ 32,139.78</span>
<span class="t" style="font-size:8.3px;line-height:11px;top:622px;color:#565a6e;letter-spacing:-0.028px;left:188.00px;">Invoiced Past 30 Days</span>
<span class="t" style="font-size:8.3px;line-height:11px;top:622px;color:#565a6e;letter-spacing:-0.116px;right:436.82px;">$ 0.00</span>
<span class="t" style="font-size:10px;line-height:13px;top:89px;color:#212437;-webkit-text-stroke:0.15px #212437;letter-spacing:0.361px;left:570.40px;">Profit and Loss Summary</span>
<span class="t" style="font-size:8.3px;line-height:11px;top:90px;color:#4e77f2;letter-spacing:0.091px;right:29.91px;">full report</span>
<span class="t" style="font-size:6px;line-height:8px;top:119px;color:#62667a;letter-spacing:-0.744px;right:370.54px;">21k</span>
<span class="t" style="font-size:6px;line-height:8px;top:138px;color:#62667a;letter-spacing:-0.744px;right:370.54px;">18k</span>
<span class="t" style="font-size:6px;line-height:8px;top:157px;color:#62667a;letter-spacing:-0.744px;right:370.54px;">14k</span>
<span class="t" style="font-size:6px;line-height:8px;top:175px;color:#62667a;letter-spacing:-0.817px;right:370.62px;">11k</span>
<span class="t" style="font-size:6px;line-height:8px;top:194px;color:#62667a;letter-spacing:-0.444px;right:370.24px;">7k</span>
<span class="t" style="font-size:6px;line-height:8px;top:213px;color:#62667a;letter-spacing:-0.444px;right:370.24px;">4k</span>
<span class="t" style="font-size:6px;line-height:8px;top:232px;color:#62667a;letter-spacing:0.042px;right:369.76px;">348</span>
<span class="t" style="font-size:6px;line-height:8px;top:250px;color:#62667a;letter-spacing:0.278px;right:369.52px;">-3k</span>
<span class="t" style="font-size:6px;line-height:8px;top:269px;color:#62667a;letter-spacing:0.278px;right:369.52px;">-7k</span>
<span class="t" style="font-size:6px;line-height:8px;top:288px;color:#62667a;letter-spacing:-0.224px;right:370.02px;">-10k</span>
<span class="t" style="font-size:6px;line-height:8px;top:306px;color:#62667a;letter-spacing:-0.224px;right:370.02px;">-14k</span>
<span class="t" style="font-size:6.1px;line-height:8px;top:318px;color:#62667a;letter-spacing:0.686px;left:621.54px;transform:translateX(-50%);">Jan</span>
<span class="t" style="font-size:6.1px;line-height:8px;top:318px;color:#62667a;letter-spacing:0.142px;left:660.70px;transform:translateX(-50%);">Feb</span>
<span class="t" style="font-size:6.1px;line-height:8px;top:318px;color:#62667a;letter-spacing:0.450px;left:700.29px;transform:translateX(-50%);">Mar</span>
<span class="t" style="font-size:6.1px;line-height:8px;top:318px;color:#62667a;letter-spacing:0.358px;left:739.67px;transform:translateX(-50%);">Apr</span>
<span class="t" style="font-size:6.1px;line-height:8px;top:318px;color:#62667a;letter-spacing:0.342px;left:779.09px;transform:translateX(-50%);">May</span>
<span class="t" style="font-size:6.1px;line-height:8px;top:318px;color:#62667a;letter-spacing:0.486px;left:818.59px;transform:translateX(-50%);">Jun</span>
<span class="t" style="font-size:6.1px;line-height:8px;top:318px;color:#62667a;letter-spacing:0.102px;left:857.83px;transform:translateX(-50%);">Jul</span>
<span class="t" style="font-size:6.1px;line-height:8px;top:318px;color:#62667a;letter-spacing:0.378px;left:897.40px;transform:translateX(-50%);">Aug</span>
<span class="t" style="font-size:10px;line-height:13px;top:370px;color:#212437;-webkit-text-stroke:0.15px #212437;letter-spacing:0.501px;left:570.40px;">Spending Breakdown</span>
<span class="t" style="font-size:7.8px;line-height:10px;top:372px;color:#fff;-webkit-text-stroke:0.2px #fff;letter-spacing:0.478px;left:846.64px;transform:translateX(-50%);z-index:4;">Year</span>
<span class="t" style="font-size:8px;line-height:10px;top:372px;color:#b9bac7;letter-spacing:0.246px;left:864.40px;">Quarter</span>
<span class="t" style="font-size:8px;line-height:10px;top:372px;color:#b9bac7;letter-spacing:0.341px;left:902.60px;">Month</span>
<span class="t" style="font-size:6.9px;line-height:9px;top:462px;color:#fff;font-weight:700;letter-spacing:-0.062px;left:766.03px;transform:translateX(-50%);text-shadow:0 .5px 1px rgba(0,0,0,.5);">34.9%</span>
<span class="t" style="font-size:6.9px;line-height:9px;top:579px;color:#fff;font-weight:700;letter-spacing:-0.062px;left:729.26px;transform:translateX(-50%);text-shadow:0 .5px 1px rgba(0,0,0,.5);">14.7%</span>
<span class="t" style="font-size:6.9px;line-height:9px;top:582px;color:#fff;font-weight:700;letter-spacing:-0.062px;left:653.13px;transform:translateX(-50%);text-shadow:0 .5px 1px rgba(0,0,0,.5);">13.9%</span>
<span class="t" style="font-size:6.9px;line-height:9px;top:542px;color:#fff;font-weight:700;letter-spacing:-0.173px;left:609.73px;transform:translateX(-50%);text-shadow:0 .5px 1px rgba(0,0,0,.5);">8.1%</span>
<span class="t" style="font-size:6.9px;line-height:9px;top:508px;color:#fff;font-weight:700;letter-spacing:-0.173px;left:600.30px;transform:translateX(-50%);text-shadow:0 .5px 1px rgba(0,0,0,.5);">4.9%</span>
<span class="t" style="font-size:6.9px;line-height:9px;top:482px;color:#fff;font-weight:700;letter-spacing:-0.173px;left:602.44px;transform:translateX(-50%);text-shadow:0 .5px 1px rgba(0,0,0,.5);">4.5%</span>
<span class="t" style="font-size:6.9px;line-height:9px;top:459px;color:#fff;font-weight:700;letter-spacing:-0.173px;left:611.42px;transform:translateX(-50%);text-shadow:0 .5px 1px rgba(0,0,0,.5);">4.5%</span>
<span class="t" style="font-size:6.4px;line-height:8px;top:408px;color:#42465a;letter-spacing:0.209px;left:818.50px;">Contract Labor</span>
<span class="t" style="font-size:6.4px;line-height:8px;top:418px;color:#42465a;letter-spacing:0.109px;left:818.50px;">Taxes and Licenses</span>
<span class="t" style="font-size:6.4px;line-height:8px;top:427px;color:#42465a;letter-spacing:0.211px;left:818.50px;">Health Insurance</span>
<span class="t" style="font-size:6.4px;line-height:8px;top:437px;color:#42465a;letter-spacing:0.116px;left:818.50px;">Office Supplies</span>
<span class="t" style="font-size:6.4px;line-height:8px;top:447px;color:#42465a;letter-spacing:0.181px;left:818.50px;">Software</span>
<span class="t" style="font-size:6.4px;line-height:8px;top:456px;color:#42465a;letter-spacing:0.041px;left:818.50px;">Office Expenses</span>
<span class="t" style="font-size:6.4px;line-height:8px;top:466px;color:#42465a;letter-spacing:0.047px;left:818.50px;">Paypal Fees</span>
<span class="t" style="font-size:6.4px;line-height:8px;top:475px;color:#42465a;letter-spacing:0.064px;left:818.50px;">Legal, Accountant &amp; Other Prof...</span>
<span class="t" style="font-size:6.4px;line-height:8px;top:485px;color:#42465a;letter-spacing:0.160px;left:818.50px;">Rent for Office/Workplace/Cowo...</span>
<span class="t" style="font-size:6.4px;line-height:8px;top:494px;color:#42465a;letter-spacing:0.004px;left:818.50px;">Phone</span>
<span class="t" style="font-size:6.4px;line-height:8px;top:504px;color:#42465a;letter-spacing:0.094px;left:818.50px;">Travel</span>
<span class="t" style="font-size:6.4px;line-height:8px;top:514px;color:#42465a;letter-spacing:0.255px;left:818.50px;">Meals/Entertainment</span>
<span class="t" style="font-size:6.4px;line-height:8px;top:523px;color:#42465a;letter-spacing:0.208px;left:818.50px;">Postage / Shipping</span>
<span class="t" style="font-size:6.4px;line-height:8px;top:533px;color:#42465a;letter-spacing:0.249px;left:818.50px;">Charitable Contributions</span>
<span class="t" style="font-size:6.4px;line-height:8px;top:542px;color:#42465a;letter-spacing:0.151px;left:818.50px;">Employee Benefit Programs</span>
<span class="t" style="font-size:6.4px;line-height:8px;top:552px;color:#42465a;letter-spacing:0.084px;left:818.50px;">Meals</span>
<span class="t" style="font-size:6.4px;line-height:8px;top:561px;color:#42465a;letter-spacing:0.188px;left:818.50px;">Car and Truck</span>
<span class="t" style="font-size:6.4px;line-height:8px;top:571px;color:#42465a;letter-spacing:-0.095px;left:818.50px;">Bank Fees</span>
<span class="t" style="font-size:6.4px;line-height:8px;top:580px;color:#42465a;letter-spacing:0.173px;left:818.50px;">Bank and Credit Card Interest</span>
<span class="t" style="font-size:6.4px;line-height:8px;top:590px;color:#42465a;letter-spacing:0.233px;left:818.50px;">Education</span>
</div>
</body></html>
